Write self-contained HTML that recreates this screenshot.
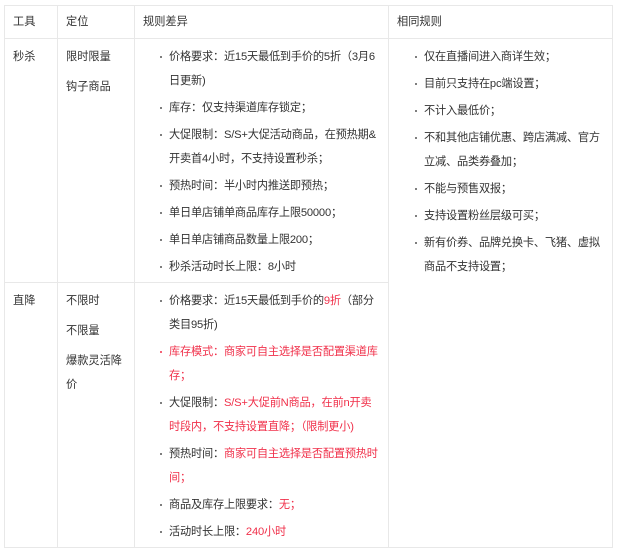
<!DOCTYPE html>
<html><head><meta charset="utf-8"><style>
body{margin:0;background:#fff;font-family:"Liberation Sans","Noto Sans CJK SC",sans-serif;font-size:11.2px;color:#333;}
table{position:absolute;left:4px;top:5px;border-collapse:collapse;table-layout:fixed;width:608px;}
td{border:1px solid #e8e8e8;vertical-align:top;padding:6px 8px 0;line-height:24px;}
tr.h td{height:24px;padding:4px 8px 4px;}
p{margin:0 0 6px;white-space:nowrap}
ul{margin:0;padding:0 0 0 26px;list-style:none}
li{position:relative;margin-bottom:3px;white-space:nowrap;letter-spacing:-0.2px}
li:before{content:"";position:absolute;left:-9px;top:11px;width:2px;height:2px;border-radius:50%;background:#555}
li.r:before{background:#f0304a}
.r{color:#f0304a}
</style></head><body>
<table>
<colgroup><col style="width:53px"><col style="width:77px"><col style="width:254px"><col style="width:224px"></colgroup>
<tr class="h"><td>工具</td><td>定位</td><td>规则差异</td><td>相同规则</td></tr>
<tr><td style="height:232px">秒杀</td><td><p>限时限量</p><p>钩子商品</p></td>
<td><ul>
<li>价格要求：近15天最低到手价的5折（3月6<br>日更新)</li>
<li>库存：仅支持渠道库存锁定；</li>
<li>大促限制：S/S+大促活动商品，在预热期&amp;<br>开卖首4小时，不支持设置秒杀；</li>
<li>预热时间：半小时内推送即预热；</li>
<li>单日单店铺单商品库存上限50000；</li>
<li>单日单店铺商品数量上限200；</li>
<li>秒杀活动时长上限：8小时</li>
</ul></td>
<td rowspan="2"><ul style="padding-left:27px;padding-right:2px">
<li>仅在直播间进入商详生效；</li>
<li>目前只支持在pc端设置；</li>
<li>不计入最低价；</li>
<li>不和其他店铺优惠、跨店满减、官方<br>立减、品类券叠加；</li>
<li>不能与预售双报；</li>
<li>支持设置粉丝层级可买；</li>
<li>新有价券、品牌兑换卡、飞猪、虚拟<br>商品不支持设置；</li>
</ul></td></tr>
<tr><td style="height:252px">直降</td><td><p>不限时</p><p>不限量</p><p>爆款灵活降<br>价</p></td>
<td><ul>
<li>价格要求：近15天最低到手价的<span class="r">9折</span>（部分<br>类目95折)</li>
<li class="r">库存模式：商家可自主选择是否配置渠道库<br>存；</li>
<li>大促限制：<span class="r">S/S+大促前N商品，在前n开卖<br>时段内，不支持设置直降；（限制更小)</span></li>
<li>预热时间：<span class="r">商家可自主选择是否配置预热时<br>间；</span></li>
<li>商品及库存上限要求：<span class="r">无；</span></li>
<li>活动时长上限：<span class="r">240小时</span></li>
</ul></td></tr>
</table>
</body></html>
